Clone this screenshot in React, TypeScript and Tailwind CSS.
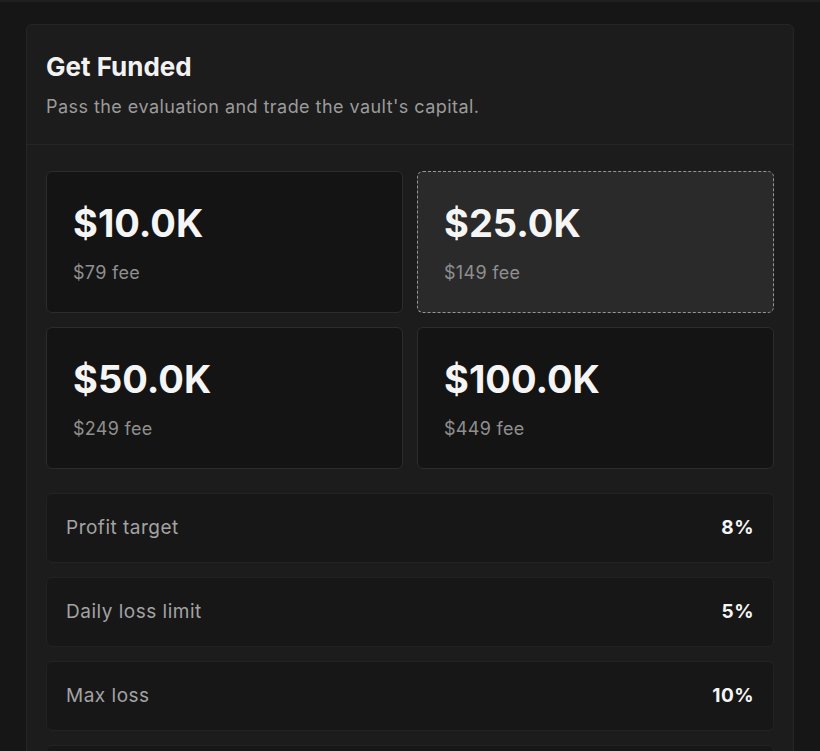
import React from "react";

const plans = [
  { amount: "$10.0K", fee: "$79 fee", selected: false },
  { amount: "$25.0K", fee: "$149 fee", selected: true },
  { amount: "$50.0K", fee: "$249 fee", selected: false },
  { amount: "$100.0K", fee: "$449 fee", selected: false },
];

const rules = [
  { label: "Profit target", value: "8%" },
  { label: "Daily loss limit", value: "5%" },
  { label: "Max loss", value: "10%" },
  { label: "Profit split", value: "80%" },
];

const App = () => {
  return (
    <div className="min-h-screen w-full bg-[#161616] border-t-2 border-[#1f1f1f] pt-[22px] font-['Inter','Liberation_Sans',sans-serif]">
      <div className="mx-[26px] rounded-md border border-[#262626] bg-[#1c1c1c]">
        <div className="px-[19px] pt-[26px] pb-[25px] border-b border-[#262626]">
          <h2 className="text-[26px] leading-8 font-bold text-[#f2f2f2]">Get Funded</h2>
          <p className="mt-3 text-[18px] leading-6 tracking-[0.45px] text-[#9b9b9b]">
            Pass the evaluation and trade the vault's capital.
          </p>
        </div>

        <div className="px-[19px] pt-[26px] pb-6">
          <div className="grid grid-cols-2 gap-[14px]">
            {plans.map((p) => (
              <div
                key={p.amount}
                className={
                  p.selected
                    ? "h-[142px] rounded-md border border-dashed border-[#969696] bg-[#2a2a2a] pl-[26px] pt-[31px]"
                    : "h-[142px] rounded-md border border-[#2c2c2c] bg-[#141414] pl-[26px] pt-[31px]"
                }
              >
                <div className="text-[38px] leading-10 font-bold text-[#f5f5f5]">{p.amount}</div>
                <div className="mt-[18px] text-[18px] leading-6 tracking-[0.3px] text-[#8f8f8f]">{p.fee}</div>
              </div>
            ))}
          </div>

          <div className="mt-6 flex flex-col gap-[14px]">
            {rules.map((r) => (
              <div
                key={r.label}
                className="h-[70px] flex items-center justify-between rounded-md border border-[#232323] bg-[#171717] px-[19px]"
              >
                <span className="text-[19px] tracking-[0.5px] text-[#a3a3a3]">{r.label}</span>
                <span className="text-[19px] font-bold tracking-[0.5px] text-[#f5f5f5]">{r.value}</span>
              </div>
            ))}
          </div>
        </div>
      </div>
    </div>
  );
};

export default App;
